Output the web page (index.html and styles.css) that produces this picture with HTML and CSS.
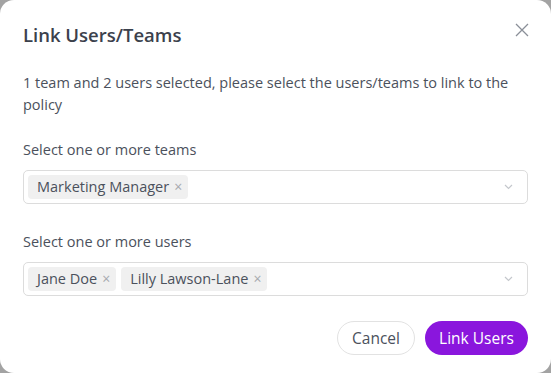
FILE: index.html
```html
<!DOCTYPE html>
<html lang="en">
<head>
  <meta charset="UTF-8">
  <title>Link Users/Teams</title>
  <link rel="stylesheet" href="styles.css">
</head>
<body>
  <div class="dialog">
    <div class="dialog-head">
      <h2>Link Users/Teams</h2>
      <button class="close" aria-label="Close">
        <svg width="14" height="14" viewBox="0 0 14 14"><path d="M1 1L13 13M13 1L1 13" stroke="#8a8f98" stroke-width="1.3" fill="none"/></svg>
      </button>
    </div>

    <p class="intro">1 team and 2 users selected, please select the users/teams to link to the policy</p>

    <div class="field">
      <label>Select one or more teams</label>
      <div class="select">
        <div class="tags">
          <span class="tag">Marketing Manager<i>×</i></span>
        </div>
        <svg class="chevron" width="9" height="6" viewBox="0 0 9 6"><path d="M1 1L4.5 4.5L8 1" stroke="#c4c7cc" stroke-width="1.2" fill="none"/></svg>
      </div>
    </div>

    <div class="field">
      <label>Select one or more users</label>
      <div class="select">
        <div class="tags">
          <span class="tag">Jane Doe<i>×</i></span>
          <span class="tag">Lilly Lawson-Lane<i>×</i></span>
        </div>
        <svg class="chevron" width="9" height="6" viewBox="0 0 9 6"><path d="M1 1L4.5 4.5L8 1" stroke="#c4c7cc" stroke-width="1.2" fill="none"/></svg>
      </div>
    </div>

    <div class="actions">
      <button class="btn btn-cancel">Cancel</button>
      <button class="btn btn-primary">Link Users</button>
    </div>
  </div>
</body>
</html>
```

FILE: styles.css
```css
body {
  margin: 0;
  padding: 0;
  background: #a3a3a3;
  font-family: 'Open Sans', 'Noto Sans', sans-serif;
  color: #4b515c;
}

.dialog {
  width: 551px;
  height: 373px;
  box-sizing: border-box;
  background: #ffffff;
  border-radius: 14px;
  padding: 19px 23px 0 23px;
}

.dialog-head {
  display: flex;
  justify-content: space-between;
  align-items: center;
  height: 30px;
}

.dialog-head h2 {
  margin: 0;
  font-size: 18.5px;
  font-weight: 600;
  color: #3b414c;
}

.close {
  border: none;
  background: none;
  padding: 0;
  margin-right: -1px;
  margin-top: -8px;
  display: flex;
}

.intro {
  margin: 23px 0 0 0;
  font-size: 14.5px;
  line-height: 22px;
}

.field {
  margin-top: 24px;
}

.field + .field {
  margin-top: 28px;
}

.field label {
  display: block;
  font-size: 14.5px;
  line-height: 20px;
  margin-bottom: 10px;
}

.select {
  display: flex;
  align-items: center;
  justify-content: space-between;
  height: 34px;
  box-sizing: border-box;
  border: 1px solid #dcdcdc;
  border-radius: 5px;
  padding: 0 14px 0 4px;
}

.tags {
  display: flex;
  gap: 5px;
}

.tag {
  background: #f0f0f0;
  border-radius: 4px;
  font-size: 14.5px;
  line-height: 24px;
  padding: 0 6px 0 9px;
  color: #4b515c;
}

.tag i {
  font-style: normal;
  color: #a6a9ae;
  font-size: 14px;
  margin-left: 5px;
}

.actions {
  display: flex;
  justify-content: flex-end;
  gap: 10px;
  margin-top: 25px;
}

.btn {
  font-family: inherit;
  font-size: 15.5px;
  height: 34px;
  border-radius: 17px;
  padding: 0;
  cursor: pointer;
}

.btn-cancel {
  background: #ffffff;
  border: 1px solid #e2e2e2;
  color: #4b515c;
  width: 78px;
}

.btn-primary {
  background: #8a16dd;
  border: none;
  color: #ffffff;
  font-weight: 500;
  width: 103px;
}
```
